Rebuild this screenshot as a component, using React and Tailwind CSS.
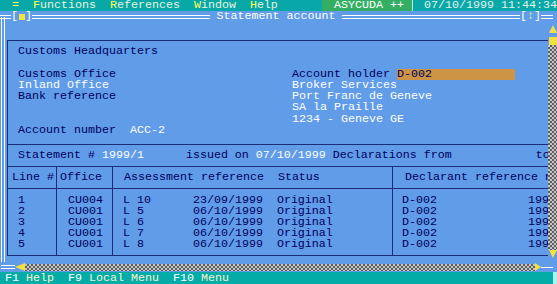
import React from 'react';

const texture = 'bg-[repeating-conic-gradient(#5e5e5e_0_25%,#c6c6c6_0_50%)] bg-[length:4px_4px]';

const rows = [
    ['1', 'CU004', 'L 10      23/09/1999  Original'],
    ['2', 'CU001', 'L 5       06/10/1999  Original'],
    ['3', 'CU001', 'L 6       06/10/1999  Original'],
    ['4', 'CU001', 'L 7       06/10/1999  Original'],
    ['5', 'CU001', 'L 8       06/10/1999  Original'],
];

function DoubleLine({ className = '' }) {
    return <div className={`h-[4px] border-y border-white ${className}`} />;
}

function Y({ children }) {
    return <span className="text-[#ffff50]">{children}</span>;
}

function Arrow({ dir }) {
    // little yellow scroll arrows
    const pts = {
        up: '4,0 8,8 0,8',
        down: '0,0 8,0 4,8',
        left: '0,4 10,0 10,8',
        right: '0,0 6,4 0,8',
    }[dir];
    const size = dir === 'left' ? [10, 8] : dir === 'right' ? [6, 8] : [8, 8];
    return (
        <svg width={size[0]} height={size[1]} viewBox={`0 0 ${size[0]} ${size[1]}`} className="shrink-0">
            <polygon points={pts} fill="#f4e040" />
        </svg>
    );
}

export default function App() {
    return (
        <div className="w-[557px] h-[284px] overflow-hidden bg-[#609ce8] font-['Liberation_Mono',monospace] text-[11.67px] leading-[11px] flex flex-col whitespace-pre">
            {/* menu bar */}
            <div className="h-[11px] shrink-0 bg-[#08a8a8] flex items-center">
                <span className="w-[322px] pl-[5px] text-[#e6f2dc]">
                    {' '}<Y>=</Y>  <Y>F</Y>unctions  <Y>R</Y>eferences  <Y>W</Y>indow  <Y>H</Y>elp
                </span>
                <span className="w-[90px] h-full flex items-center pl-[12px] bg-[#34ae62] text-white">ASYCUDA ++</span>
                <span className="flex-1 h-full flex items-center pl-[11px] border-l border-[#c8f0e0] text-[#e4f0ec]">07/10/1999 11:44:34</span>
            </div>

            {/* window title */}
            <div className="h-[11px] shrink-0 flex items-center text-white">
                <div className="w-[11px] h-[4px] border-y border-white" />
                <span>[</span>
                <span className="w-[7px] flex justify-center"><span className="w-[6px] h-[6px] bg-[#f4e040]" /></span>
                <span>]</span>
                <DoubleLine className="flex-1" />
                <span> Statement account </span>
                <DoubleLine className="flex-1" />
                <span>[</span>
                <span className="w-[7px] text-center text-[#d4f070]">↕</span>
                <span>]</span>
                <DoubleLine className="w-[12px]" />
                <div className="w-[4px]" />
            </div>

            {/* window body */}
            <div className="flex-1 min-h-0 flex">
                <div className="w-[7px] shrink-0 flex">
                    <div className="ml-[1px] w-[4px] -mt-[5px] border-x border-white" />
                </div>

                <div className="flex-1 min-w-0 mt-[18px] mb-[6px] border-l border-y border-[#1c2c78] flex flex-col overflow-hidden text-[#00005c]">
                    <div className="h-[104px] shrink-0 border-b border-[#1c2c78] pt-[5px] pl-[10px] grid grid-cols-[274px_1fr] leading-[11.3px]">
                        <div className="flex flex-col">
                            <span>Customs Headquarters</span>
                            <span> </span>
                            <span>Customs Office</span>
                            <span className="text-white">Inland Office</span>
                            <span>Bank reference</span>
                            <span> </span>
                            <span> </span>
                            <span>Account number  <span className="text-white">ACC-2</span></span>
                        </div>
                        <div className="flex flex-col text-white">
                            <span> </span>
                            <span> </span>
                            <span className="flex items-center text-[#00005c]">
                                Account holder <span className="w-[118px] h-[11px] flex items-center bg-[#cc9444]">D-002</span>
                            </span>
                            <span>Broker Services</span>
                            <span>Port Franc de Geneve</span>
                            <span>SA la Praille</span>
                            <span>1234 - Geneve GE</span>
                        </div>
                    </div>

                    <div className="h-[22px] shrink-0 border-b border-[#1c2c78] flex items-center pl-[10px]">
                        Statement # <span className="text-white">1999/1</span>      issued on <span className="text-white">07/10/1999</span> Declarations from            to
                    </div>

                    <div className="h-[22px] shrink-0 border-b border-[#1c2c78] flex">
                        <div className="w-[49px] shrink-0 border-r border-[#1c2c78] flex items-center pl-[4px]">Line #</div>
                        <div className="w-[56px] shrink-0 border-r border-[#1c2c78] flex items-center pl-[3px]">Office</div>
                        <div className="w-[280px] shrink-0 border-r border-[#1c2c78] flex items-center pl-[11px]">Assessment reference  Status</div>
                        <div className="flex-1 flex items-center pl-[12px]">Declarant reference number</div>
                    </div>

                    <div className="flex-1 flex">
                        <div className="w-[49px] shrink-0 border-r border-[#1c2c78] pt-[6px] pl-[10px] flex flex-col">
                            {rows.map(r => <span key={r[0]}>{r[0]}</span>)}
                        </div>
                        <div className="w-[56px] shrink-0 border-r border-[#1c2c78] pt-[6px] pl-[11px] flex flex-col">
                            {rows.map(r => <span key={r[0]}>{r[1]}</span>)}
                        </div>
                        <div className="w-[280px] shrink-0 border-r border-[#1c2c78] pt-[6px] pl-[10px] flex flex-col">
                            {rows.map(r => <span key={r[0]}>{r[2]}</span>)}
                        </div>
                        <div className="flex-1 pt-[6px] pl-[9px] flex flex-col">
                            {rows.map(r => <span key={r[0]}>D-002             1999/000{r[0]}</span>)}
                        </div>
                    </div>
                </div>

                {/* vertical scrollbar */}
                <div className="w-[9px] shrink-0 flex flex-col items-center pt-[3px] pb-[4px]">
                    <Arrow dir="up" />
                    <div className="h-[4px] w-full" />
                    <div className="h-[8px] w-[8px] bg-[#f4e040]" />
                    <div className={`flex-1 w-full ${texture}`} />
                    <Arrow dir="down" />
                </div>
            </div>

            {/* horizontal scrollbar */}
            <div className="h-[10px] shrink-0 flex items-center">
                <DoubleLine className="ml-[1px] w-[14px]" />
                <Arrow dir="left" />
                <div className={`flex-1 h-[7px] ${texture}`} />
                <Arrow dir="right" />
                <div className="w-[12px] h-[1px] bg-white" />
                <div className="w-[4px]" />
            </div>

            {/* status bar */}
            <div className="h-[12px] shrink-0 bg-[#04aca8] flex items-center text-white">
                <span className="flex-1 pl-[5px]">F1 <span className="text-[#f6f2c8]">Help</span>  F9 <span className="text-[#f6f2c8]">Local Menu</span>  F10 <span className="text-[#f6f2c8]">Menu</span></span>
                <span className="w-[4px] h-full bg-[#a8f4f4]" />
            </div>
        </div>
    );
}
